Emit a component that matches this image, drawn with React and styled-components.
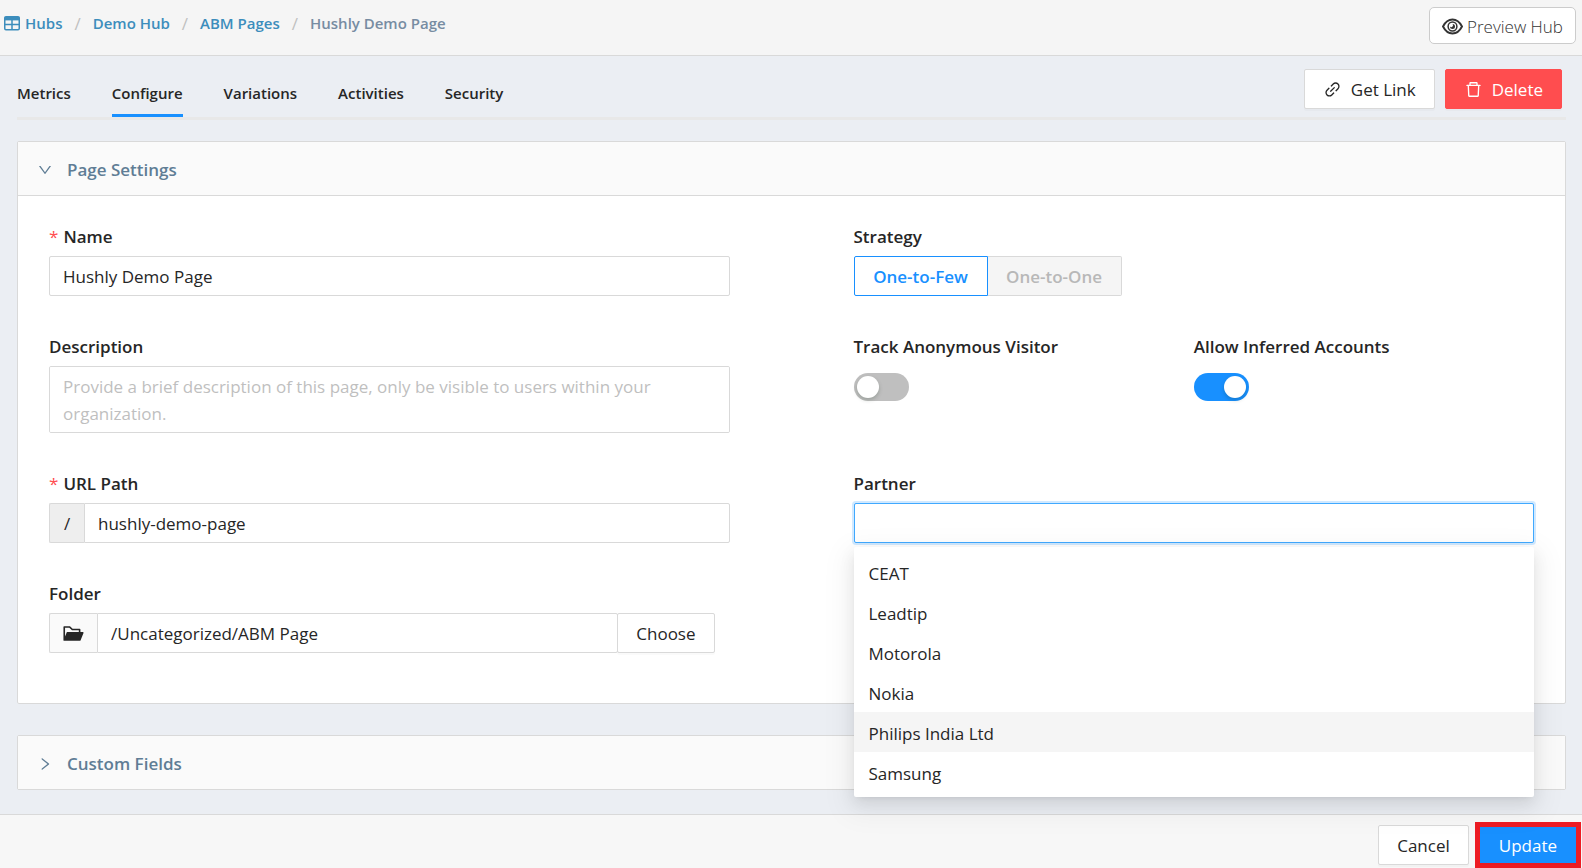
import React, { useState } from 'react';
import styled, { createGlobalStyle, css } from 'styled-components';
import {
  AiOutlineDelete,
  AiOutlineDown,
  AiOutlineLink,
  AiOutlineRight,
  AiFillFolderOpen,
} from 'react-icons/ai';

const GlobalStyle = createGlobalStyle`
  * {
    box-sizing: border-box;
  }

  body {
    margin: 0;
    background: #ebeef3;
    color: #262626;
    font-family: 'Segoe UI', 'Open Sans', 'Noto Sans', sans-serif;
    font-size: 17px;
    line-height: 27px;
  }

  button, input, textarea {
    font: inherit;
    color: inherit;
  }
`;

const Page = styled.div`
  min-height: 100vh;
  display: flex;
  flex-direction: column;
`;

const Header = styled.header`
  display: flex;
  align-items: flex-start;
  justify-content: space-between;
  height: 56px;
  padding: 7px 6px 0 4px;
  background: #f5f5f5;
  border-bottom: 1px solid #d9d9d9;
`;

const Breadcrumb = styled.nav`
  display: flex;
  align-items: center;
  gap: 12px;
  height: 33px;
  font-size: 15px;
  font-weight: 600;
  color: #778ca2;
  white-space: nowrap;

  a {
    display: flex;
    align-items: center;
    gap: 5px;
    color: #3c8dbc;
    text-decoration: none;
  }
`;

const Slash = styled.span`
  color: #c0c0c0;
  font-size: 17px;
  font-weight: 400;
`;

const PreviewButton = styled.button`
  display: flex;
  align-items: center;
  gap: 4px;
  height: 37px;
  padding: 1px 12px 0;
  background: #fff;
  border: 1px solid #ccc;
  border-radius: 5px;
  color: #333;
  font-weight: 300;
  cursor: pointer;
`;

const Main = styled.main`
  flex: 1;
  padding: 13px 16px 24px 17px;
`;

const TabsBar = styled.div`
  display: flex;
  justify-content: space-between;
  height: 51px;
  margin-bottom: 21px;
  padding-right: 4px;
  border-bottom: 3px solid #e8e8e8;
`;

const Tabs = styled.nav`
  display: flex;
  gap: 41px;
`;

const Tab = styled.a`
  height: 48px;
  padding-top: 11px;
  border-bottom: 3px solid ${({ $active }) => ($active ? '#1890ff' : 'transparent')};
  color: #262626;
  font-size: 15px;
  font-weight: 600;
  text-decoration: none;
`;

const Actions = styled.div`
  display: flex;
  gap: 10px;
`;

const variants = {
  default: css`
    background: #fff;
    border-color: #d9d9d9;
  `,
  danger: css`
    background: #ff4d4f;
    border-color: #ff4d4f;
    color: #fff;
  `,
  primary: css`
    background: #1890ff;
    border-color: #1890ff;
    color: #fff;
  `,
};

const Button = styled.button`
  display: flex;
  align-items: center;
  justify-content: center;
  gap: 9px;
  height: 40px;
  padding: 0 18px;
  border: 1px solid;
  border-radius: 2px;
  box-shadow: 0 2px 0 rgba(0, 0, 0, 0.02);
  cursor: pointer;
  ${({ $variant = 'default' }) => variants[$variant]}
`;

const Panel = styled.section`
  background: #fff;
  border: 1px solid #d9d9d9;
  border-radius: 2px;

  & + & {
    margin-top: 31px;
  }
`;

const PanelHeader = styled.button`
  display: flex;
  align-items: center;
  gap: 14px;
  width: 100%;
  height: 53px;
  padding: 2px 19px 0;
  background: #fafafa;
  border: 0;
  color: #5f7d95;
  font-weight: 600;
  cursor: pointer;
`;

const PanelBody = styled.div`
  display: grid;
  grid-template-columns: 1fr 1fr;
  column-gap: 124px;
  row-gap: 37px;
  padding: 27px 31px 50px;
  border-top: 1px solid #d9d9d9;
`;

const Field = styled.div`
  position: relative;
  min-width: 0;
`;

const Label = styled.label`
  display: block;
  width: fit-content;
  margin-bottom: 6px;
  font-weight: 600;
`;

const Required = styled.span`
  margin-right: 5px;
  color: #ff4d4f;
  font-weight: 400;
`;

const fieldBox = css`
  width: 100%;
  padding: 0 13px;
  background: #fff;
  border: 1px solid #d9d9d9;
  border-radius: 2px;
  outline: 0;
`;

const Input = styled.input`
  ${fieldBox}
  display: block;
  height: 40px;
`;

const Textarea = styled.textarea`
  ${fieldBox}
  display: block;
  height: 67px;
  padding: 6px 13px;
  resize: none;

  &::placeholder {
    color: #bfbfbf;
  }
`;

const ComboInput = styled(Input)`
  border-color: #40a9ff;
  box-shadow: 0 0 0 2px rgba(24, 144, 255, 0.2);
`;

const InputGroup = styled.div`
  display: flex;

  ${Input} {
    flex: 1;
    min-width: 0;
    border-radius: 0 2px 2px 0;
  }
`;

const FolderGroup = styled(InputGroup)`
  margin-right: 15px;

  ${Button} {
    margin-left: -1px;
  }
`;

const Addon = styled.span`
  display: flex;
  align-items: center;
  justify-content: center;
  width: ${({ $light }) => ($light ? '48px' : '35px')};
  background: ${({ $light }) => ($light ? '#fafafa' : '#eee')};
  border: 1px solid #d9d9d9;
  border-right: 0;
  border-radius: 2px 0 0 2px;
`;

const RadioGroup = styled.div`
  display: flex;
`;

const RadioButton = styled.label`
  display: flex;
  align-items: center;
  justify-content: center;
  width: 134px;
  height: 40px;
  background: ${({ $checked }) => ($checked ? '#fff' : '#f5f5f5')};
  border: 1px solid ${({ $checked }) => ($checked ? '#1890ff' : '#d9d9d9')};
  border-left-width: ${({ $checked }) => ($checked ? '1px' : '0')};
  border-radius: ${({ $checked }) => ($checked ? '2px 0 0 2px' : '0 2px 2px 0')};
  color: ${({ $checked }) => ($checked ? '#1890ff' : '#b8b8b8')};
  font-weight: 600;

  input {
    appearance: none;
    margin: 0;
  }
`;

const SwitchRow = styled.div`
  display: grid;
  grid-template-columns: 1fr 1fr;
`;

const Switch = styled.input`
  appearance: none;
  display: flex;
  width: 55px;
  height: 28px;
  margin: 13px 0 0;
  padding: 3px;
  background: #bfbfbf;
  border-radius: 14px;
  cursor: pointer;

  &::before {
    content: '';
    width: 22px;
    height: 22px;
    background: #fff;
    border-radius: 50%;
    box-shadow: 0 2px 4px rgba(0, 35, 11, 0.2);
  }

  &:checked {
    justify-content: flex-end;
    background: #1890ff;
  }
`;

const Dropdown = styled.ul`
  position: absolute;
  top: 77px;
  left: 0;
  right: 0;
  z-index: 10;
  margin: 0;
  padding: 5px 0;
  list-style: none;
  background: #fff;
  border-radius: 2px;
  box-shadow:
    0 3px 6px -4px rgba(0, 0, 0, 0.12),
    0 6px 16px rgba(0, 0, 0, 0.08),
    0 9px 28px 8px rgba(0, 0, 0, 0.05);
`;

const Option = styled.li`
  padding: 8px 15px 5px;
  background: ${({ $active }) => ($active ? '#f5f5f5' : 'transparent')};
  cursor: pointer;
`;

const Footer = styled.footer`
  display: flex;
  align-items: flex-end;
  justify-content: flex-end;
  gap: 6px;
  height: 54px;
  padding-right: 1px;
  background: #f7f7f7;
  border-top: 1px solid #d9d9d9;

  > ${Button} {
    margin-bottom: 3px;
  }
`;

const Highlight = styled.div`
  border: 5px solid #ed1c24;

  ${Button} {
    height: 36px;
    border-radius: 0;
  }
`;

const TableIcon = () => (
  <svg width="16" height="15" viewBox="0 0 16 15" fill="none" stroke="currentColor" aria-hidden="true">
    <rect x="0.75" y="0.75" width="14.5" height="13" rx="1.2" strokeWidth="1.5" />
    <path d="M0.6 1h14.8v3.4H0.6z" fill="currentColor" stroke="none" />
    <path d="M0.6 8.6h14.8M8 3.5v10.4" strokeWidth="1.5" />
  </svg>
);

const EyeIcon = () => (
  <svg width="21" height="17" viewBox="0 0 21 17" fill="none" stroke="currentColor" aria-hidden="true">
    <path d="M1 8.5C3.3 4 6.6 1.5 10.5 1.5S17.7 4 20 8.5C17.7 13 14.4 15.5 10.5 15.5S3.3 13 1 8.5Z" strokeWidth="1.9" />
    <circle cx="10.5" cy="8.5" r="4.4" strokeWidth="1.5" />
    <path d="M10.5 6a2.5 2.5 0 1 1-2.5 2.5 1.6 1.6 0 0 0 2.5-2.5Z" fill="currentColor" stroke="none" />
  </svg>
);

const tabs = ['Metrics', 'Configure', 'Variations', 'Activities', 'Security'];
const partners = ['CEAT', 'Leadtip', 'Motorola', 'Nokia', 'Philips India Ltd', 'Samsung'];

const App = () => {
  const [trackAnonymous, setTrackAnonymous] = useState(false);
  const [allowInferred, setAllowInferred] = useState(true);

  return (
    <Page>
      <GlobalStyle />
      <Header>
        <Breadcrumb aria-label="Breadcrumb">
          <a href="#hubs"><TableIcon />Hubs</a>
          <Slash>/</Slash>
          <a href="#demo-hub">Demo Hub</a>
          <Slash>/</Slash>
          <a href="#abm-pages">ABM Pages</a>
          <Slash>/</Slash>
          <span>Hushly Demo Page</span>
        </Breadcrumb>
        <PreviewButton type="button"><EyeIcon />Preview Hub</PreviewButton>
      </Header>

      <Main>
        <TabsBar>
          <Tabs>
            {tabs.map((tab) => (
              <Tab key={tab} href={`#${tab.toLowerCase()}`} $active={tab === 'Configure'}>
                {tab}
              </Tab>
            ))}
          </Tabs>
          <Actions>
            <Button type="button"><AiOutlineLink size={19} />Get Link</Button>
            <Button type="button" $variant="danger"><AiOutlineDelete size={19} />Delete</Button>
          </Actions>
        </TabsBar>

        <Panel>
          <PanelHeader type="button" aria-expanded="true">
            <AiOutlineDown size={16} />Page Settings
          </PanelHeader>
          <PanelBody>
            <Field>
              <Label htmlFor="name"><Required>*</Required>Name</Label>
              <Input id="name" defaultValue="Hushly Demo Page" />
            </Field>
            <Field>
              <Label as="div" id="strategy">Strategy</Label>
              <RadioGroup role="radiogroup" aria-labelledby="strategy">
                <RadioButton $checked>
                  <input type="radio" name="strategy" defaultChecked />One-to-Few
                </RadioButton>
                <RadioButton>
                  <input type="radio" name="strategy" disabled />One-to-One
                </RadioButton>
              </RadioGroup>
            </Field>

            <Field>
              <Label htmlFor="description">Description</Label>
              <Textarea
                id="description"
                placeholder="Provide a brief description of this page, only be visible to users within your organization."
              />
            </Field>
            <SwitchRow>
              <Field>
                <Label htmlFor="track">Track Anonymous Visitor</Label>
                <Switch
                  id="track"
                  type="checkbox"
                  checked={trackAnonymous}
                  onChange={(e) => setTrackAnonymous(e.target.checked)}
                />
              </Field>
              <Field>
                <Label htmlFor="inferred">Allow Inferred Accounts</Label>
                <Switch
                  id="inferred"
                  type="checkbox"
                  checked={allowInferred}
                  onChange={(e) => setAllowInferred(e.target.checked)}
                />
              </Field>
            </SwitchRow>

            <Field>
              <Label htmlFor="url"><Required>*</Required>URL Path</Label>
              <InputGroup>
                <Addon>/</Addon>
                <Input id="url" defaultValue="hushly-demo-page" />
              </InputGroup>
            </Field>
            <Field>
              <Label htmlFor="partner">Partner</Label>
              <ComboInput id="partner" role="combobox" aria-expanded="true" aria-controls="partners" />
              <Dropdown id="partners" role="listbox">
                {partners.map((partner) => (
                  <Option
                    key={partner}
                    role="option"
                    aria-selected={partner === 'Philips India Ltd'}
                    $active={partner === 'Philips India Ltd'}
                  >
                    {partner}
                  </Option>
                ))}
              </Dropdown>
            </Field>

            <Field>
              <Label htmlFor="folder">Folder</Label>
              <FolderGroup>
                <Addon $light><AiFillFolderOpen size={23} /></Addon>
                <Input id="folder" defaultValue="/Uncategorized/ABM Page" />
                <Button type="button">Choose</Button>
              </FolderGroup>
            </Field>
          </PanelBody>
        </Panel>

        <Panel>
          <PanelHeader type="button" aria-expanded="false">
            <AiOutlineRight size={16} />Custom Fields
          </PanelHeader>
        </Panel>
      </Main>

      <Footer>
        <Button type="button">Cancel</Button>
        <Highlight>
          <Button type="button" $variant="primary">Update</Button>
        </Highlight>
      </Footer>
    </Page>
  );
};

export default App;
